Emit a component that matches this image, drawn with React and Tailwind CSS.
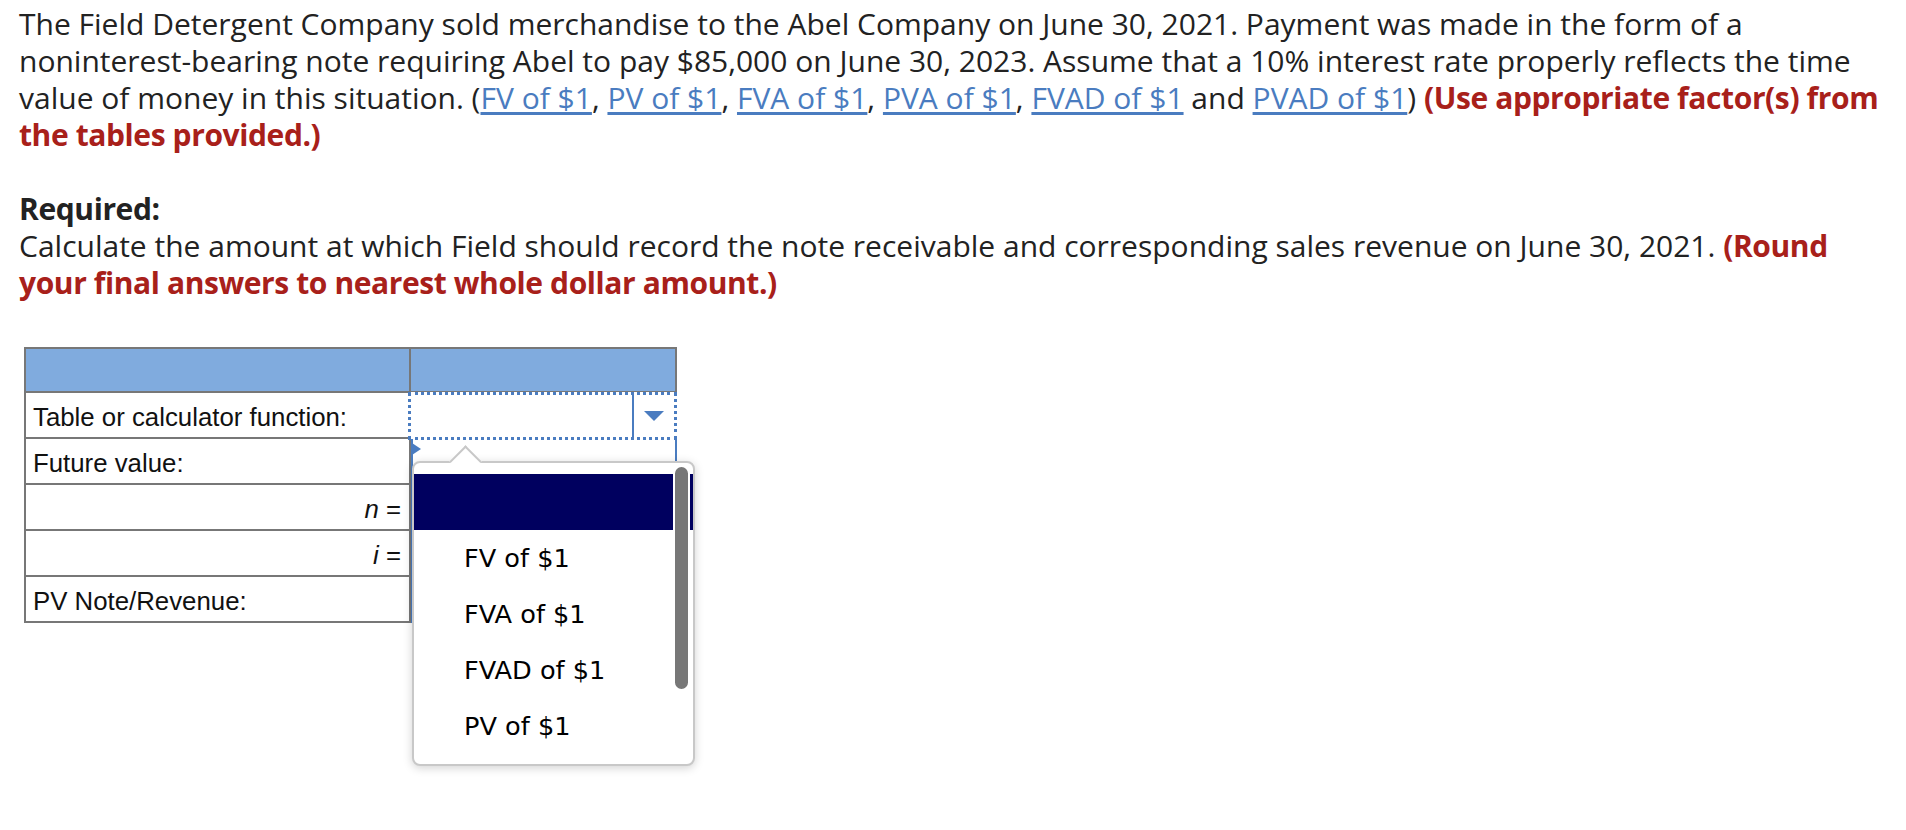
import React from 'react'

const factorLinks = ['FV of $1', 'PV of $1', 'FVA of $1', 'PVA of $1', 'FVAD of $1', 'PVAD of $1']
// only the first four fit in the open list
const options = ['FV of $1', 'FVA of $1', 'FVAD of $1', 'PV of $1']

const FactorLink = ({ children }) => (
  <a href="#" className="text-[#4a7cc0] underline decoration-[#4a7cc0] underline-offset-[3px]">
    {children}
  </a>
)

const Row = ({ label, right, align = 'left' }) => (
  <div className="flex h-[46px]">
    <div
      className={`w-[387px] shrink-0 border-2 border-t-0 border-[#777] flex items-center pt-[5px] ${
        align === 'right' ? 'justify-end pr-[8px]' : 'pl-[7px]'
      }`}
    >
      {label}
    </div>
    <div className="flex-1 relative">{right}</div>
  </div>
)

const BlueBox = ({ marker }) => (
  <div className="h-full border-2 border-l-0 border-t-0 border-[#4a7cc0] relative">
    <div className="absolute left-0 top-0 bottom-0 w-[2px] bg-[#4a7cc0]" />
    {marker && (
      <div className="absolute left-[1px] top-[4px] w-0 h-0 border-y-[6px] border-y-transparent border-l-[9px] border-l-[#4a7cc0]" />
    )}
  </div>
)

export default function App() {
  return (
    <div className="min-h-screen bg-white text-[#222] font-['Open_Sans','Liberation_Sans',sans-serif]">
      <div className="pl-[19px] pt-[5px] w-[1900px] text-[30px] leading-[37px]">
        <p>
          The Field Detergent Company sold merchandise to the Abel Company on June 30, 2021. Payment was made in
          the form of a noninterest-bearing note requiring Abel to pay $85,000 on June 30, 2023. Assume that a 10%
          interest rate properly reflects the time value of money in this situation. (
          {factorLinks.map((l, i) => (
            <React.Fragment key={l}>
              <FactorLink>{l}</FactorLink>
              {i < factorLinks.length - 2 ? ', ' : i === factorLinks.length - 2 ? ' and ' : ''}
            </React.Fragment>
          ))}
          ){' '}
          <strong className="font-bold tracking-[-0.4px] text-[#a8201a]">
            (Use appropriate factor(s) from the tables provided.)
          </strong>
        </p>

        <p className="mt-[37px]">
          <strong className="font-bold tracking-[-0.4px]">Required:</strong>
          <br />
          Calculate the amount at which Field should record the note receivable and corresponding sales revenue on
          June 30, 2021.{' '}
          <strong className="font-bold tracking-[-0.4px] text-[#a8201a]">
            (Round your final answers to nearest whole dollar amount.)
          </strong>
        </p>
      </div>

      {/* table */}
      <div className="relative ml-[24px] mt-[46px] w-[653px] font-['Liberation_Sans','Arial',sans-serif] text-[25.8px] text-[#111]">
        <div className="flex h-[46px]">
          <div className="w-[387px] shrink-0 bg-[#80abde] border-2 border-[#777]" />
          <div className="flex-1 bg-[#80abde] border-2 border-l-0 border-[#777]" />
        </div>

        <Row
          label="Table or calculator function:"
          right={
            <div className="absolute -left-[3px] -top-[1px] right-0 h-[48px] border-[3px] border-dotted border-[#4a7cc0] bg-white flex">
              <div className="flex-1" />
              <div className="w-[42px] border-l-2 border-[#4a7cc0] flex items-center justify-center">
                <div className="w-0 h-0 border-x-[10px] border-x-transparent border-t-[10px] border-t-[#4a7cc0]" />
              </div>
            </div>
          }
        />
        <Row label="Future value:" right={<BlueBox marker />} />
        <Row
          align="right"
          label={
            <span>
              <i>n</i> =
            </span>
          }
          right={<BlueBox />}
        />
        <Row
          align="right"
          label={
            <span>
              <i>i</i> =
            </span>
          }
          right={<BlueBox />}
        />
        <Row label="PV Note/Revenue:" right={<BlueBox />} />

        {/* dropdown popup */}
        <div className="absolute left-[388px] top-[98px] w-[283px] h-[18px] overflow-hidden z-20">
          <div className="absolute left-[42px] top-[5px] w-[23px] h-[23px] rotate-45 bg-white border-l-2 border-t-2 border-[#c8c8c8]" />
        </div>
        <div className="absolute left-[388px] top-[114px] w-[283px] h-[305px] bg-white border-2 border-[#c8c8c8] rounded-[8px] shadow-[0_2px_10px_rgba(0,0,0,0.18)] overflow-hidden z-10 font-['DejaVu_Sans','Verdana',sans-serif] text-[25.6px] text-black">
          <div className="pt-[11px]">
            <div className="h-[56px] bg-[#00005f]" />
            {options.map((o) => (
              <div key={o} className="h-[56px] flex items-center pl-[50px]">
                {o}
              </div>
            ))}
          </div>
          <div className="absolute right-[3px] top-[2px] w-[17px] h-[226px] rounded-full bg-[#777] border-[2.5px] border-white" />
        </div>
      </div>
    </div>
  )
}
